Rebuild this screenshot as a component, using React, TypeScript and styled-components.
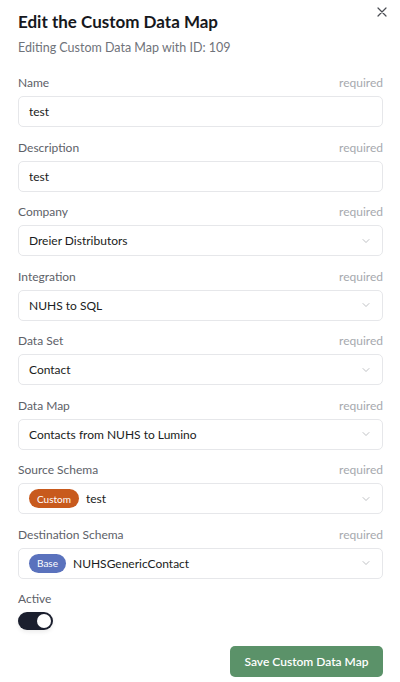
import { createGlobalStyle } from "styled-components";
import styled from "styled-components";

const GlobalStyle = createGlobalStyle`
  body {
    margin: 0;
    background: #ffffff;
    font-family: "Lato", "Noto Sans", sans-serif;
    color: #1d1f24;
  }
`;

const Panel = styled.div`
  position: relative;
  width: 400px;
  height: 682px;
  box-sizing: border-box;
  padding: 12px 17px 0 18px;
  background: #fff;
`;

const Close = styled.button`
  position: absolute;
  top: 5px;
  right: 11px;
  width: 14px;
  height: 14px;
  padding: 0;
  border: none;
  background: none;
  display: flex;
  align-items: center;
  justify-content: center;
`;

const Title = styled.h1`
  margin: 0;
  font-size: 17px;
  line-height: 20px;
  font-weight: 700;
  color: #16181d;
`;

const Subtitle = styled.p`
  margin: 8px 0 0;
  font-size: 12.5px;
  line-height: 16px;
  color: #6f737a;
`;

const Fields = styled.div`
  margin-top: 19px;
  display: flex;
  flex-direction: column;
  gap: 12.5px;
`;

const Field = styled.div`
  display: flex;
  flex-direction: column;
  gap: 5px;
`;

const LabelRow = styled.div`
  display: flex;
  justify-content: space-between;
  font-size: 12px;
  line-height: 16px;
  color: #5d6168;
`;

const Required = styled.span`
  color: #a6a9ae;
`;

const Box = styled.div`
  height: 31px;
  box-sizing: border-box;
  border: 1px solid #e6e7ea;
  border-radius: 5px;
  display: flex;
  align-items: center;
  padding: 0 10px;
  gap: 7px;
  font-size: 12px;
  color: #1a1c21;
`;

const Value = styled.span`
  flex: 1;
`;

const Badge = styled.span<{ $tone: string }>`
  background: ${(p) => p.$tone};
  color: #fff;
  font-size: 10px;
  height: 19px;
  padding: 0 8px;
  border-radius: 10px;
  display: inline-flex;
  align-items: center;
`;

const Switch = styled.div`
  width: 35px;
  height: 18px;
  border-radius: 9px;
  background: #1b1f2e;
  box-sizing: border-box;
  padding: 2px;
  display: flex;
  justify-content: flex-end;
  box-shadow: 0 2px 4px rgba(0, 0, 0, 0.08);
`;

const Knob = styled.div`
  width: 14px;
  height: 14px;
  border-radius: 50%;
  background: #fff;
`;

const Footer = styled.div`
  margin-top: 16px;
  display: flex;
  justify-content: flex-end;
`;

const SaveButton = styled.button`
  width: 153px;
  height: 31px;
  border: none;
  border-radius: 5px;
  background: #5b9269;
  color: #fff;
  font-family: inherit;
  font-size: 12px;
  font-weight: 600;
`;

const Chevron = () => (
  <svg width="12" height="12" viewBox="0 0 24 24" fill="none" stroke="#a3a6ab" strokeWidth="1.4" strokeLinecap="round" strokeLinejoin="round">
    <path d="M6 9l6 6 6-6" />
  </svg>
);

type F = { label: string; value: string; select?: boolean; badge?: [string, string] };

const fields: F[] = [
  { label: "Name", value: "test" },
  { label: "Description", value: "test" },
  { label: "Company", value: "Dreier Distributors", select: true },
  { label: "Integration", value: "NUHS to SQL", select: true },
  { label: "Data Set", value: "Contact", select: true },
  { label: "Data Map", value: "Contacts from NUHS to Lumino", select: true },
  { label: "Source Schema", value: "test", select: true, badge: ["Custom", "#c85a1d"] },
  { label: "Destination Schema", value: "NUHSGenericContact", select: true, badge: ["Base", "#5a72bd"] },
];

export default function App() {
  return (
    <>
      <GlobalStyle />
      <Panel>
        <Close aria-label="Close">
          <svg width="10" height="10" viewBox="0 0 10 10" stroke="#4a4d53" strokeWidth="1.2" strokeLinecap="round">
            <path d="M1 1l8 8M9 1l-8 8" />
          </svg>
        </Close>
        <Title>Edit the Custom Data Map</Title>
        <Subtitle>Editing Custom Data Map with ID: 109</Subtitle>
        <Fields>
          {fields.map((f) => (
            <Field key={f.label}>
              <LabelRow>
                <span>{f.label}</span>
                <Required>required</Required>
              </LabelRow>
              <Box>
                {f.badge && <Badge $tone={f.badge[1]}>{f.badge[0]}</Badge>}
                <Value>{f.value}</Value>
                {f.select && <Chevron />}
              </Box>
            </Field>
          ))}
          <Field>
            <LabelRow>
              <span>Active</span>
            </LabelRow>
            <Switch>
              <Knob />
            </Switch>
          </Field>
        </Fields>
        <Footer>
          <SaveButton>Save Custom Data Map</SaveButton>
        </Footer>
      </Panel>
    </>
  );
}
